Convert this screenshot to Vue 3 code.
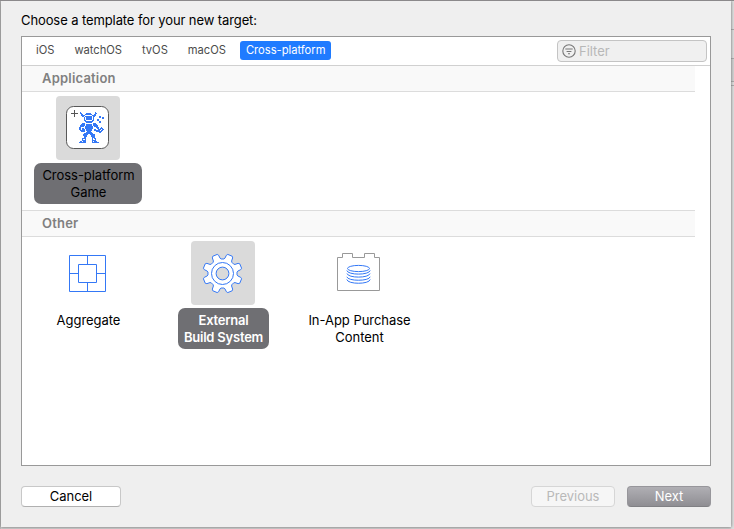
<script setup>
const tabs = ['iOS', 'watchOS', 'tvOS', 'macOS', 'Cross-platform']
const robot = [
  '.#..............#........',
  '.##....#####....##.......',
  '..##..#######..##........',
  '..####.......####........',
  '...##.#######.##....##...',
  '.....#.######.#.....##.##',
  '.....#.######.#........##',
  '.....#.######.#...##.....',
  '.....##......##...##.....',
  '......########......##...',
  '.......######.......##...',
  '...###........###........',
  '..####.######.####.......',
  '.#####.######.#####......',
  '.####.########.####......',
  '##....########...###..#..',
  '##.##.########....##.###.',
  '##.###.######..##..###.##',
  '.#####.######..######.##.',
  '..####..####.....######..',
  '.......######.......##...',
  '.....#########...........',
  '....#####..#####.........',
  '....####....####.........',
  '.....###....####.........',
  '.....##......###.........',
  '...####......#.##........',
  '...#..#......#..#........',
  '...####......####........',
  '.##.###......#.###.......',
  '#######......#######.....'
]
const gear = (() => {
  const pts = []
  for (let i = 0; i < 8; i++) {
    for (const [r, o] of [[14.6, -17], [15.5, -13.5], [18.6, -10.5], [19.8, -7], [19.8, 7], [18.6, 10.5], [15.5, 13.5], [14.6, 17]]) {
      const a = ((i * 45 + 22.5 + o) * Math.PI) / 180
      pts.push(`${(31.5 + r * Math.cos(a)).toFixed(2)},${(32.5 + r * Math.sin(a)).toFixed(2)}`)
    }
  }
  return pts.join(' ')
})()
</script>

<template>
  <div class="window">
    <div class="edge left"></div>
    <main class="sheet">
      <h1>Choose a template for your new target:</h1>
      <section class="panel">
        <header class="toolbar">
          <nav>
            <button v-for="(t, i) in tabs" :key="t" :class="['tab', { active: i === 4 }]"><span>{{ t }}</span></button>
          </nav>
          <label class="filter">
            <svg width="14" height="14" viewBox="0 0 14 14"><circle cx="7" cy="7" r="6.2" /><path d="M3.3 5h7.4M4.6 7.5h4.8M6 9.8h2" /></svg>
            <span>Filter</span>
          </label>
        </header>
        <h2><span>Application</span></h2>
        <div class="row apps">
          <article class="item selected game">
            <div class="icon">
              <svg width="64" height="64" viewBox="0 0 64 64">
                <rect x="10.5" y="10.5" width="42" height="42" rx="7" fill="#fff" stroke="#585858" />
                <path d="M15 17.5h7M18.5 14v7" stroke="#555" />
                <g fill="#3478f6" shape-rendering="crispEdges">
                  <template v-for="(line, y) in robot" :key="y">
                    <template v-for="(c, x) in line" :key="x"><rect v-if="c === '#'" :x="23 + x" :y="16 + y" width="1" height="1" /></template>
                  </template>
                </g>
              </svg>
            </div>
            <p><span>Cross-platform</span><br><span>Game</span></p>
          </article>
        </div>
        <h2 class="ruled"><span>Other</span></h2>
        <div class="row others">
          <article class="item aggregate">
            <div class="icon">
              <svg width="64" height="64" viewBox="0 0 64 64" fill="none" stroke="#3478f6"><path d="M13.5 14.5h36v36h-36zM22.5 23.5h18v18h-18zM31.5 14v9M31.5 42v9M13 32.5h9M41 32.5h9" /></svg>
            </div>
            <p><span>Aggregate</span></p>
          </article>
          <article class="item selected external">
            <div class="icon">
              <svg width="64" height="64" viewBox="0 0 64 64" stroke="#3478f6"><polygon :points="gear" fill="#fff" stroke-linejoin="round" /><circle cx="31.5" cy="32.5" r="11" fill="none" /><circle cx="31.5" cy="32.5" r="6.4" fill="#dadada" /></svg>
            </div>
            <p><span>External</span><br><span>Build System</span></p>
          </article>
          <article class="item purchase">
            <div class="icon">
              <svg width="64" height="64" viewBox="0 0 64 64" fill="none">
                <path d="M10.5 49.5v-33h5v-4h10v4h12v-4h10v4h5v33z" stroke="#999" />
                <g stroke="#3478f6"><ellipse cx="31.5" cy="27.5" rx="11" ry="3.1" /><path d="M19.8 29.5c1 4.8 22.4 4.8 23.4 0M20 32.5c1 4.8 22 4.8 23 0M19.8 35.8c1 4.6 22.4 4.6 23.4 0M19.8 38.5c1 5 22.4 5 23.4 0" /></g>
              </svg>
            </div>
            <p><span>In-App Purchase</span><br><span>Content</span></p>
          </article>
        </div>
      </section>
      <footer>
        <button class="btn cancel">Cancel</button>
        <button class="btn previous" disabled>Previous</button>
        <button class="btn next">Next</button>
      </footer>
    </main>
    <div class="edge right"><i></i><i></i><i></i></div>
  </div>
</template>

<style>
body { margin: 0; overflow: hidden; }
</style>
<style scoped>
* { box-sizing: border-box; }
button { border: 0; background: none; padding: 0; font: inherit; letter-spacing: inherit; }
.window { width: 734px; height: 529px; border-top: 1px solid #8b898b; background: #d0d0d0; display: flex; font: 13px/17px Inter, "Liberation Sans", sans-serif; letter-spacing: -0.04px; color: #000; overflow: hidden; }
.sheet { width: 730px; height: 526px; background: #efefef; padding: 11px 20px 0; box-shadow: 0 0 3px #666; position: relative; }
.edge { height: 528px; background: #bcbcbc; }
.left { width: 1px; }
.right { width: 3px; background: #dedede; padding-top: 28px; }
.right i { display: block; border-top: 1px solid #aaa; height: 29px; }
.right i + i { height: 24px; border-bottom: 1px solid #aaa; background: #d2d2d2; margin-bottom: 3px; }
.right i + i + i { height: 1px; border-bottom: 0; }
h1 { margin: 0 0 7px; font: inherit; letter-spacing: -0.1px; }
.panel { width: 690px; height: 430px; border: 1px solid #999; background: #fff; }
.toolbar { height: 29px; display: flex; justify-content: space-between; border-bottom: 1px solid #d0d0d0; padding: 3px 3px 0 8px; }
nav { display: flex; padding-top: 1px; font-size: 11.2px; letter-spacing: -0.02px; }
.tab { height: 19px; padding: 0 6px; margin-right: 8px; border-radius: 3px; color: #4c4c4c; }
.active { background: #1f7bff; color: #fff; }
.filter { width: 150px; height: 22px; border: 1px solid #c4c4c4; border-radius: 4px; background: #f0f0f0; display: flex; align-items: center; gap: 3px; padding-left: 4px; color: #b8b8b8; }
.filter svg { fill: none; stroke: #777; stroke-width: 1.1; }
h2 { width: 673px; height: 26px; margin: 0; padding-left: 20px; border-bottom: 1px solid #dcdcdc; background: #f9f9f9; color: #808080; font: 600 13px/25px Inter, sans-serif; letter-spacing: 0.2px; }
.ruled { height: 27px; border-top: 1px solid #dcdcdc; }
.row { display: flex; }
.apps { height: 118px; padding: 4px 0 0 12px; }
.others { padding: 4px 0 0; }
.item { display: flex; flex-direction: column; align-items: center; }
.icon { width: 64px; height: 64px; border-radius: 4px; }
.icon svg { display: block; }
.selected .icon { background: #dadada; }
p { margin: 3px 0 0; height: 41px; padding: 4px 0 4px 1px; text-align: center; white-space: nowrap; border-radius: 7px; }
.selected p { background: #6f6f73; }
.game p { width: 108px; }
.external p { width: 91px; color: #fff; font-weight: 600; letter-spacing: -0.22px; }
.aggregate { width: 132px; }
.external { width: 138px; }
.purchase { width: 134px; }
footer { display: flex; padding-top: 20px; }
.btn { height: 21px; border-radius: 4px; border: 1px solid #c8c8c8; border-bottom-color: #b0b0b0; background: #fff; line-height: 19px; }
.cancel { width: 100px; margin-right: auto; }
.previous { width: 84px; margin-right: 12px; background: #f6f6f6; border-color: #d6d6d6; color: #b9b9b9; }
.next { width: 84px; background: linear-gradient(#b0afb4, #8f8e93); border-color: #97969b; border-bottom-color: #808084; color: #fff; }
</style>
